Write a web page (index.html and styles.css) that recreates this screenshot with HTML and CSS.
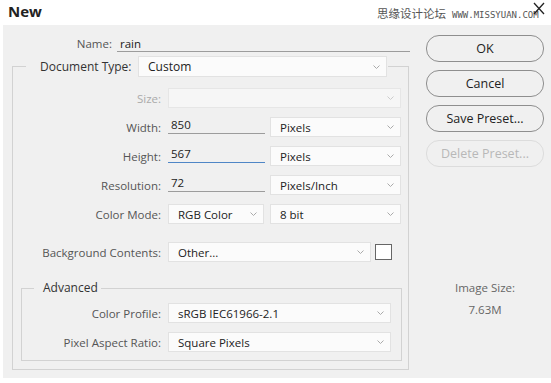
FILE: index.html
```html
<!DOCTYPE html>
<html lang="en">
<head>
    <meta charset="UTF-8">
    <title>New</title>
    <link rel="stylesheet" href="styles.css">
</head>
<body>
    <div class="dialog">
        <header class="titlebar">
            <h1>New</h1>
            <span class="watermark"><span class="wm-cn">思缘设计论坛</span><span class="wm-url">www.MISSYUAN.COM</span></span>
            <span class="close"><svg width="12" height="13" viewBox="0 0 12 13"><path d="M1 1 L11 12 M11 1 L1 12" stroke="#222" stroke-width="1.3" fill="none"/></svg></span>
        </header>

        <div class="panel">
            <div class="main">
                <div class="name-row">
                    <span class="label">Name:</span>
                    <span class="line-input name-input">rain</span>
                </div>

                <!-- Document type group -->
                <fieldset class="group">
                    <legend class="group-legend">
                        <span class="legend-label">Document Type:</span>
                        <div class="select doc-type">Custom<svg class="chev" width="7" height="4" viewBox="0 0 7 4"><path d="M0.5 0.5 L3.5 3.5 L6.5 0.5" stroke="#aaa" fill="none"/></svg></div>
                    </legend>

                    <div class="row">
                        <span class="label disabled">Size:</span>
                        <div class="select is-disabled"><span></span><svg class="chev" width="7" height="4" viewBox="0 0 7 4"><path d="M0.5 0.5 L3.5 3.5 L6.5 0.5" stroke="#ccc" fill="none"/></svg></div>
                    </div>
                    <div class="row">
                        <span class="label">Width:</span>
                        <span class="line-input num">850</span>
                        <div class="select unit">Pixels<svg class="chev" width="7" height="4" viewBox="0 0 7 4"><path d="M0.5 0.5 L3.5 3.5 L6.5 0.5" stroke="#aaa" fill="none"/></svg></div>
                    </div>
                    <div class="row">
                        <span class="label">Height:</span>
                        <span class="line-input num focused">567</span>
                        <div class="select unit">Pixels<svg class="chev" width="7" height="4" viewBox="0 0 7 4"><path d="M0.5 0.5 L3.5 3.5 L6.5 0.5" stroke="#aaa" fill="none"/></svg></div>
                    </div>
                    <div class="row">
                        <span class="label">Resolution:</span>
                        <span class="line-input num">72</span>
                        <div class="select unit">Pixels/Inch<svg class="chev" width="7" height="4" viewBox="0 0 7 4"><path d="M0.5 0.5 L3.5 3.5 L6.5 0.5" stroke="#aaa" fill="none"/></svg></div>
                    </div>
                    <div class="row">
                        <span class="label">Color Mode:</span>
                        <div class="select mode">RGB Color<svg class="chev" width="7" height="4" viewBox="0 0 7 4"><path d="M0.5 0.5 L3.5 3.5 L6.5 0.5" stroke="#aaa" fill="none"/></svg></div>
                        <div class="select unit">8 bit<svg class="chev" width="7" height="4" viewBox="0 0 7 4"><path d="M0.5 0.5 L3.5 3.5 L6.5 0.5" stroke="#aaa" fill="none"/></svg></div>
                    </div>
                    <div class="row row-bg">
                        <span class="label">Background Contents:</span>
                        <div class="select bg-select">Other...<svg class="chev" width="7" height="4" viewBox="0 0 7 4"><path d="M0.5 0.5 L3.5 3.5 L6.5 0.5" stroke="#aaa" fill="none"/></svg></div>
                        <span class="swatch"></span>
                    </div>

                    <!-- Advanced group -->
                    <fieldset class="advanced">
                        <legend class="adv-legend">Advanced</legend>
                        <div class="row adv-row first">
                            <span class="label">Color Profile:</span>
                            <div class="select">sRGB IEC61966-2.1<svg class="chev" width="7" height="4" viewBox="0 0 7 4"><path d="M0.5 0.5 L3.5 3.5 L6.5 0.5" stroke="#aaa" fill="none"/></svg></div>
                        </div>
                        <div class="row adv-row">
                            <span class="label">Pixel Aspect Ratio:</span>
                            <div class="select">Square Pixels<svg class="chev" width="7" height="4" viewBox="0 0 7 4"><path d="M0.5 0.5 L3.5 3.5 L6.5 0.5" stroke="#aaa" fill="none"/></svg></div>
                        </div>
                    </fieldset>
                </fieldset>
            </div>

            <aside class="side">
                <button class="btn">OK</button>
                <button class="btn">Cancel</button>
                <button class="btn">Save Preset...</button>
                <button class="btn" disabled>Delete Preset...</button>
                <div class="image-size">
                    <p>Image Size:</p>
                    <p class="size-value">7.63M</p>
                </div>
            </aside>
        </div>
    </div>
</body>
</html>
```

FILE: styles.css
```css
:root {
    --panel: #f0f0f0;
    --label: #555555;
    --text: #222222;
    --line: #d2d2d2;
    --field: #fbfbfb;
    --field-border: #e2e2e2;
}

* {
    box-sizing: border-box;
    margin: 0;
    padding: 0;
}

body {
    font-family: "Open Sans", "Noto Sans", sans-serif;
    font-size: 11.5px;
    color: var(--text);
    background: #ffffff;
    width: 551px;
    height: 383px;
    overflow: hidden;
}

.titlebar {
    position: relative;
    height: 25px;
    display: flex;
    align-items: center;
    justify-content: space-between;
    padding: 0 6px 2px 8px;
}

.titlebar h1 {
    font-size: 15px;
    font-weight: 700;
    color: #222;
    line-height: 1;
}

.watermark {
    position: absolute;
    left: 377px;
    top: 6px;
    display: flex;
    align-items: center;
    gap: 6px;
    color: #555;
}

.wm-cn {
    font-family: "Noto Sans CJK SC", sans-serif;
    font-size: 11.5px;
    line-height: 14px;
}

.wm-url {
    font-family: "DejaVu Sans Mono", monospace;
    font-size: 9px;
    text-transform: uppercase;
    margin-top: 3px;
}

/* close cross sits over the watermark text */
.close {
    position: absolute;
    right: 6px;
    top: 2px;
    display: block;
    width: 12px;
    height: 13px;
    line-height: 0;
}

.panel {
    margin-left: 3px;
    height: 353px;
    background: var(--panel);
    display: flex;
}

.main {
    width: 405px;
    padding-top: 11px;
}

.label {
    color: var(--label);
    text-align: right;
    white-space: nowrap;
}

.label.disabled {
    color: #aaa;
}

.name-row {
    display: flex;
    height: 16px;
    margin-right: -2px;
}

.name-row .label {
    width: 109px;
    margin-right: 5px;
    line-height: 15px;
}

.line-input {
    display: block;
    height: 16px;
    line-height: 15px;
    border-bottom: 1px solid #9c9c9c;
    color: var(--text);
    padding-left: 3px;
}

.name-input {
    flex: 1;
}

/* group boxes */
.group {
    margin: 4px 0 0 9px;
    width: 397px;
    height: 314px;
    border: 1px solid var(--line);
    padding: 11px 0 0;
}

.group-legend {
    margin-left: 13px;
    padding: 0 1px 0 14px;
    display: flex;
    align-items: center;
}

.legend-label {
    width: 98px;
    font-size: 12px;
    color: #333;
}

.select {
    flex: 1;
    height: 20px;
    background: var(--field);
    border: 1px solid var(--field-border);
    display: flex;
    align-items: center;
    justify-content: space-between;
    padding: 0 6px 0 9px;
    color: var(--text);
    white-space: nowrap;
}

.select.doc-type {
    flex: none;
    width: 249px;
    height: 21px;
    font-size: 12px;
}

.select.is-disabled {
    background: #f6f6f6;
    border-color: #e6e6e6;
}

.chev {
    flex: none;
}

.row {
    display: flex;
    align-items: center;
    height: 20px;
    margin-top: 9px;
    padding-right: 7px;
}

.row:first-of-type {
    margin-top: 0;
}

.row .label {
    width: 148px;
    margin-right: 7px;
}

.line-input.num {
    align-self: flex-start;
    width: 97px;
    height: 17px;
    line-height: 16px;
    margin-right: 5px;
}

.line-input.focused {
    border-bottom-color: #4f86c6;
}

.select.mode {
    flex: none;
    width: 96px;
    margin-right: 6px;
}

.row-bg {
    margin-top: 18px;
}

.select.bg-select {
    flex: none;
    width: 203px;
}

.swatch {
    width: 17px;
    height: 16px;
    margin-left: 4px;
    border: 1px solid #666;
    background: #fff;
}

.advanced {
    margin: 18px 6px 0 8px;
    border: 1px solid var(--line);
    padding: 0 10px 8px 0;
}

.adv-legend {
    margin-left: 12px;
    padding: 0 3px 0 9px;
    font-size: 12px;
    color: #333;
    line-height: 16px;
}

.adv-row {
    padding-right: 0;
}

.adv-row.first {
    margin-top: 7px;
}

.adv-row .label {
    width: 139px;
}

/* buttons column */
.side {
    padding: 10px 0 0 18px;
}

.btn {
    display: block;
    width: 118px;
    height: 27px;
    margin-bottom: 8px;
    border: 1px solid #8e8e8e;
    border-radius: 13px;
    background: var(--panel);
    font-family: inherit;
    font-size: 12.5px;
    color: var(--text);
}

.btn:disabled {
    border-color: #dcdcdc;
    color: #b8b8b8;
}

.image-size {
    margin-top: 110px;
    text-align: center;
    color: #666;
    line-height: 22px;
}
```
